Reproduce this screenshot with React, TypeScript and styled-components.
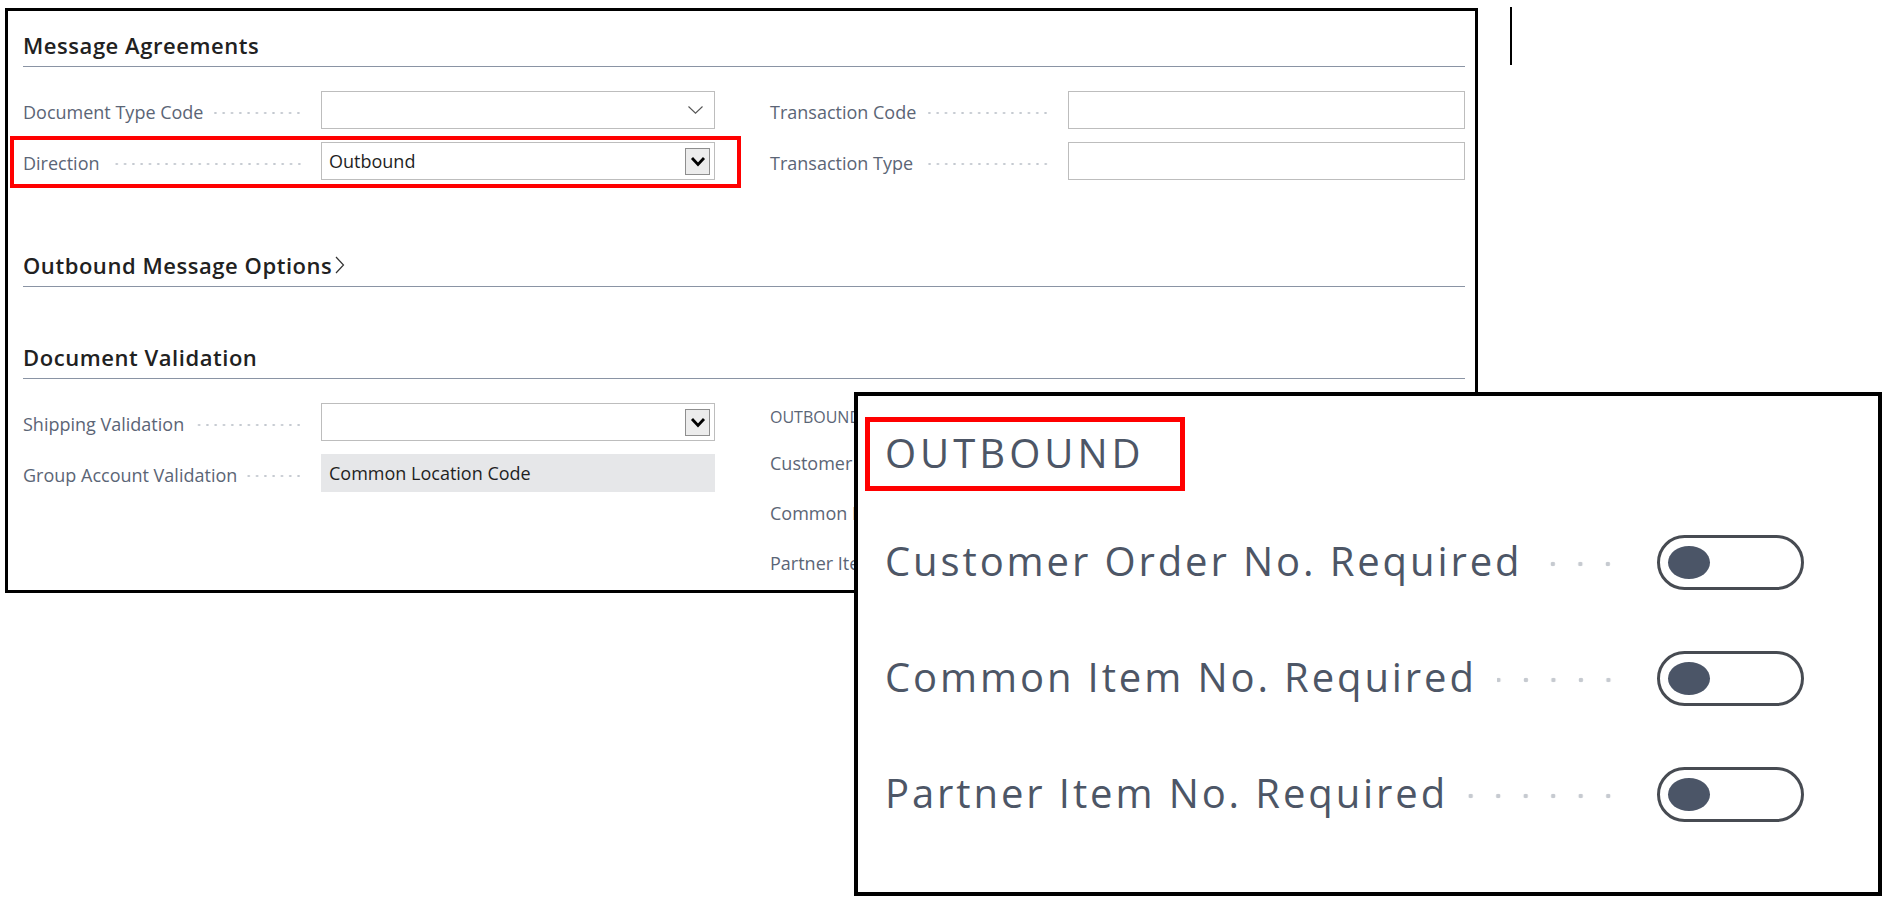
import React from "react";
import styled, { createGlobalStyle } from "styled-components";

const GlobalStyle = createGlobalStyle`
  body {
    margin: 0;
    background: #fff;
    font-family: "Open Sans", "Noto Sans", sans-serif;
  }
`;

const Page = styled.div`
  position: relative;
  width: 1891px;
  height: 907px;
  box-sizing: border-box;
  padding: 8px 0 0 5px;
  display: flex;
  align-items: flex-start;
  overflow: hidden;
`;

const Panel = styled.div`
  width: 1473px;
  height: 585px;
  flex-shrink: 0;
  box-sizing: border-box;
  border: 3px solid #000;
  padding: 0 10px 0 15px;
  overflow: hidden;
  background: #fff;
`;

const EdgeLine = styled.div`
  width: 2px;
  height: 58px;
  margin: -1px 0 0 32px;
  background: #000;
`;

const SectionTitle = styled.div<{ $gap: number }>`
  margin-top: ${(p) => p.$gap}px;
  padding-bottom: 6px;
  border-bottom: 1px solid #8a94a4;
  display: flex;
  align-items: center;
  font-size: 22px;
  font-weight: 600;
  letter-spacing: 0.55px;
  line-height: 30px;
  color: #212121;
`;

const Columns = styled.div<{ $gap: number }>`
  margin-top: ${(p) => p.$gap}px;
  display: grid;
  grid-template-columns: 692px 1fr;
  column-gap: 55px;
  align-items: start;
`;

const Column = styled.div`
  display: flex;
  flex-direction: column;
  gap: 13px;
`;

const FieldRow = styled.div<{ $marked?: boolean }>`
  position: relative;
  display: grid;
  grid-template-columns: 298px 1fr;
  height: 38px;
  align-items: center;

  ${(p) =>
    p.$marked &&
    `
    &::after {
      content: "";
      position: absolute;
      top: -6px;
      left: -13px;
      right: -26px;
      bottom: -8px;
      border: 4px solid #ff0000;
      pointer-events: none;
    }
  `}
`;

const Label = styled.div`
  display: flex;
  align-items: center;
  padding: 4px 18px 0 0;
  font-size: 18px;
  color: #5b6576;
  white-space: nowrap;
`;

const Leader = styled.span`
  flex: 1;
  height: 4px;
  margin: 2px 0 0 10px;
  background-image: radial-gradient(circle, #c3c8cf 0.9px, transparent 1.4px);
  background-size: 8.3px 4px;
  background-position: right center;
  background-repeat: repeat-x;
`;

const Input = styled.div<{ $readOnly?: boolean }>`
  height: 38px;
  box-sizing: border-box;
  border: 1px solid ${(p) => (p.$readOnly ? "transparent" : "#bdbdbd")};
  background: ${(p) => (p.$readOnly ? "#e6e7e9" : "#fff")};
  display: flex;
  align-items: center;
  justify-content: space-between;
  padding: 0 4px 0 7px;
  font-size: 18px;
  color: #1f1f1f;
  white-space: nowrap;
`;

const PlainChevron = styled.svg`
  margin-right: 7px;
`;

const ChevronButton = styled.div`
  width: 25px;
  height: 27px;
  box-sizing: border-box;
  border: 1px solid #8e8e8e;
  background: #ececec;
  display: flex;
  align-items: center;
  justify-content: center;
`;

const GroupCaption = styled.div`
  margin-top: 3px;
  font-size: 16px;
  line-height: 22px;
  color: #5b6576;
`;

const SmallToggleRow = styled.div`
  height: 50px;
  display: flex;
  align-items: center;
  font-size: 18px;
  color: #5b6576;
  white-space: nowrap;
`;

const ToggleStack = styled.div`
  margin-top: 10px;
  display: flex;
  flex-direction: column;
`;

const SectionChevron = styled.svg`
  margin-left: 3px;
`;

/* zoomed callout laid over the page */
const Callout = styled.div`
  position: absolute;
  left: 854px;
  top: 392px;
  width: 1028px;
  height: 504px;
  box-sizing: border-box;
  border: 4px solid #000;
  background: #fff;
  padding: 21px 0 0 7px;
  color: #4d5666;
`;

const CalloutCaption = styled.div`
  width: 320px;
  height: 74px;
  box-sizing: border-box;
  border: 5px solid #ff0000;
  display: flex;
  align-items: center;
  padding: 0 0 3px 15px;
  font-size: 40px;
  letter-spacing: 4px;
  line-height: 54px;
`;

const BigRows = styled.div`
  margin-top: 44px;
  padding-left: 20px;
  display: flex;
  flex-direction: column;
  gap: 61px;
`;

const BigRow = styled.div`
  display: grid;
  grid-template-columns: 737px 147px;
  column-gap: 35px;
  height: 55px;
  align-items: center;
`;

const BigLabel = styled.div`
  display: flex;
  align-items: center;
  margin-top: -3px;
  font-size: 40px;
  line-height: 54px;
  letter-spacing: 2.9px;
  white-space: nowrap;
`;

const BigLeader = styled.span`
  flex: 1;
  height: 6px;
  margin: 6px 0 0 20px;
  background-image: radial-gradient(circle, #c6cad0 2px, transparent 2.6px);
  background-size: 27.5px 6px;
  background-position: right center;
  background-repeat: repeat-x;
`;

const Switch = styled.div`
  width: 147px;
  height: 55px;
  box-sizing: border-box;
  border: 3px solid #474b52;
  border-radius: 28px;
  display: flex;
  align-items: center;
  padding-left: 8px;
`;

const Knob = styled.div`
  width: 42px;
  height: 33px;
  border-radius: 50%;
  background: #4b5567;
`;

const Chevron = ({ bold }: { bold?: boolean }) =>
  bold ? (
    <svg width="16" height="11" viewBox="0 0 16 11">
      <polyline points="2,2 8,8.5 14,2" fill="none" stroke="#000" strokeWidth="2.8" />
    </svg>
  ) : (
    <PlainChevron width="15" height="8" viewBox="0 0 15 8">
      <polyline points="0.5,0.5 7.5,7.2 14.5,0.5" fill="none" stroke="#555" strokeWidth="1.1" />
    </PlainChevron>
  );

type FieldProps = {
  label: string;
  value?: string;
  kind?: "plain" | "select" | "combo" | "readonly";
  marked?: boolean;
};

const Field = ({ label, value, kind = "plain", marked }: FieldProps) => (
  <FieldRow $marked={marked}>
    <Label>
      <span>{label}</span>
      <Leader />
    </Label>
    <Input $readOnly={kind === "readonly"}>
      <span>{value}</span>
      {kind === "select" && <Chevron />}
      {kind === "combo" && (
        <ChevronButton>
          <Chevron bold />
        </ChevronButton>
      )}
    </Input>
  </FieldRow>
);

const outboundToggles = [
  "Customer Order No. Required",
  "Common Item No. Required",
  "Partner Item No. Required",
];

export default function App() {
  return (
    <>
      <GlobalStyle />
      <Page>
        <Panel>
          <SectionTitle $gap={19}>Message Agreements</SectionTitle>
          <Columns $gap={24}>
            <Column>
              <Field label="Document Type Code" kind="select" />
              <Field label="Direction" value="Outbound" kind="combo" marked />
            </Column>
            <Column>
              <Field label="Transaction Code" />
              <Field label="Transaction Type" />
            </Column>
          </Columns>

          <SectionTitle $gap={70}>
            Outbound Message Options
            <SectionChevron width="10" height="20" viewBox="0 0 10 20">
              <polyline points="1,2 8.5,10 1,18" fill="none" stroke="#333" strokeWidth="1.2" />
            </SectionChevron>
          </SectionTitle>

          <SectionTitle $gap={55}>Document Validation</SectionTitle>
          <Columns $gap={24}>
            <Column>
              <Field label="Shipping Validation" kind="combo" />
              <Field label="Group Account Validation" value="Common Location Code" kind="readonly" />
            </Column>
            <div>
              <GroupCaption>OUTBOUND</GroupCaption>
              <ToggleStack>
                {outboundToggles.map((t) => (
                  <SmallToggleRow key={t}>{t}</SmallToggleRow>
                ))}
              </ToggleStack>
            </div>
          </Columns>
        </Panel>
        <EdgeLine />

        <Callout>
          <CalloutCaption>OUTBOUND</CalloutCaption>
          <BigRows>
            {outboundToggles.map((t) => (
              <BigRow key={t}>
                <BigLabel>
                  <span>{t}</span>
                  <BigLeader />
                </BigLabel>
                <Switch>
                  <Knob />
                </Switch>
              </BigRow>
            ))}
          </BigRows>
        </Callout>
      </Page>
    </>
  );
}
